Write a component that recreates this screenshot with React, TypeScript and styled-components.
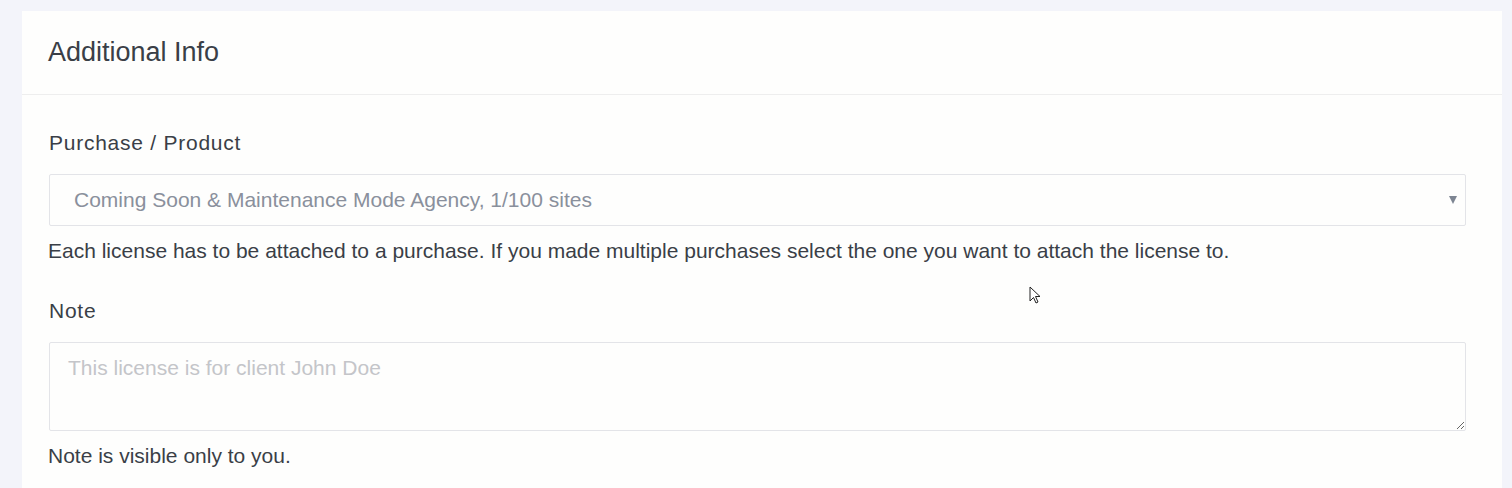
import styled, { createGlobalStyle } from 'styled-components';

const GlobalStyle = createGlobalStyle`
  html, body {
    margin: 0;
    padding: 0;
    background: #f3f4fa;
  }
  body {
    font-family: "Liberation Sans", Arial, sans-serif;
    color: #3a3f47;
  }
`;

const Page = styled.div`
  height: 488px;
  overflow: hidden;
  padding: 11px 10px 0 22px;
  box-sizing: border-box;
  position: relative;
`;

const Card = styled.section`
  background: #fefefd;
  min-height: 500px;
`;

const CardHeader = styled.header`
  height: 84px;
  display: flex;
  align-items: center;
  padding: 0 26px;
  border-bottom: 1px solid #eeeeee;
  box-sizing: border-box;
`;

const Title = styled.h2`
  margin: 0;
  font-size: 27px;
  font-weight: normal;
  color: #3a3f47;
`;

const CardBody = styled.div`
  padding: 36px 36px 0 26px;
  display: flex;
  flex-direction: column;
`;

const Field = styled.div`
  display: flex;
  flex-direction: column;
  margin-bottom: 36px;
`;

const Label = styled.label`
  font-size: 21px;
  line-height: 24px;
  letter-spacing: 0.75px;
  margin-bottom: 19px;
  margin-left: 1px;
  color: #3a3f47;
`;

const SelectBox = styled.div`
  position: relative;
  height: 52px;
  margin-left: 1px;
  border: 1px solid #e3e4e8;
  border-radius: 2px;
  display: flex;
  align-items: center;
  padding: 0 24px;
  box-sizing: border-box;
  font-size: 21px;
  color: #8a909c;
`;

const Caret = styled.span`
  position: absolute;
  right: 8px;
  top: 50%;
  margin-top: -4px;
  width: 0;
  height: 0;
  border-left: 4px solid transparent;
  border-right: 4px solid transparent;
  border-top: 8px solid #7d8592;
`;

const NoteArea = styled.textarea`
  height: 89px;
  margin: 0 0 0 1px;
  border: 1px solid #e3e4e8;
  border-radius: 2px;
  padding: 13px 18px;
  box-sizing: border-box;
  font-family: "Liberation Sans", Arial, sans-serif;
  font-size: 21px;
  line-height: 24px;
  background: transparent;
  resize: vertical;
  outline: none;
  &::placeholder {
    color: #c4c5c9;
  }
`;

const Help = styled.p`
  margin: 13px 0 0;
  font-size: 21px;
  line-height: 24px;
  color: #3a3f47;
`;

const Pointer = styled.svg`
  position: absolute;
  left: 1029px;
  top: 286px;
`;

export default function App() {
  return (
    <Page>
      <GlobalStyle />
      <Card>
        <CardHeader>
          <Title>Additional Info</Title>
        </CardHeader>
        <CardBody>
          <Field>
            <Label>Purchase / Product</Label>
            <SelectBox>
              Coming Soon &amp; Maintenance Mode Agency, 1/100 sites
              <Caret />
            </SelectBox>
            <Help>
              Each license has to be attached to a purchase. If you made multiple purchases select the one you want to attach the license to.
            </Help>
          </Field>
          <Field>
            <Label>Note</Label>
            <NoteArea placeholder="This license is for client John Doe" />
            <Help>Note is visible only to you.</Help>
          </Field>
        </CardBody>
      </Card>
      <Pointer width="14" height="20" viewBox="0 0 14 20">
        <path d="M1 1 L1 15 L4.5 11.5 L7 17 L9 16 L6.5 10.5 L11 10.5 Z" fill="#fff" stroke="#222" strokeWidth="1" />
      </Pointer>
    </Page>
  );
}
